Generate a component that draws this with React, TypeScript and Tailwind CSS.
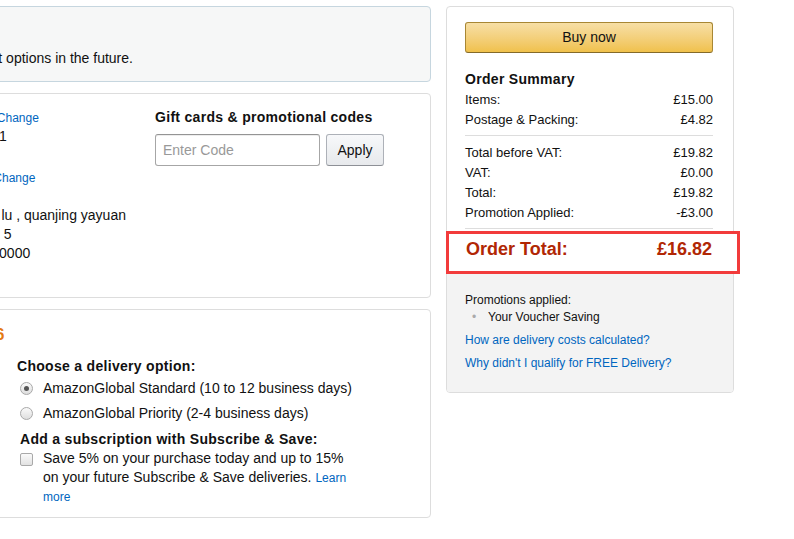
import React from "react";

function Radio({ checked }: { checked?: boolean }) {
    return (
        <span className="flex h-[13px] w-[13px] shrink-0 items-center justify-center rounded-full border border-[#a9a9a9] bg-linear-to-b from-[#fafafa] to-[#dedede]">
            {checked && <span className="h-[5px] w-[5px] rounded-full bg-[#555]" />}
        </span>
    );
}

function Row({ label, value }: { label: string; value: string }) {
    return (
        <div className="flex h-[20px] items-center justify-between">
            <span>{label}</span>
            <span>{value}</span>
        </div>
    );
}

export default function App() {
    return (
        <div className="min-h-[539px] bg-white font-['Liberation_Sans',Arial,sans-serif] text-[#111]">
            <div className="flex items-start gap-[15px] pt-[6px]">
                {/* left column, page scrolled so its start is off screen */}
                <div className="-ml-[248px] flex w-[679px] shrink-0 flex-col gap-[11px] text-[14px]">
                    <div className="rounded-[4px] border border-[#c6d6df] bg-[#f6f7f7] px-[18px] pb-[13px] pt-[20px]">
                        <p className="whitespace-nowrap text-[14px] font-bold leading-[22px]">Save time on future orders</p>
                        <p className="whitespace-nowrap leading-[19px]">
                            We'll use these delivery and payment options in the future.
                        </p>
                    </div>

                    <div className="flex rounded-[4px] border border-[#ddd] px-[18px] pb-[15px] pt-[14px] leading-[19px]">
                        <div className="w-[95px] overflow-hidden whitespace-nowrap">
                            <p className="font-bold">Delivery</p>
                            <p>Li Ming</p>
                            <p>Hangzhou</p>
                        </div>
                        <div className="ml-[14px] w-[265px] whitespace-nowrap">
                            <div className="flex h-[19px] items-baseline">
                                <span className="font-bold">Payment method</span>
                                <a className="ml-[4px] text-[12px] text-[#0066c0]">Change</a>
                            </div>
                            <p>VISA ending in 4321</p>
                            <div className="mt-[22px] flex h-[19px] items-baseline">
                                <span className="font-bold">Billing address</span>
                                <a className="ml-[13px] text-[12px] text-[#0066c0]">Change</a>
                            </div>
                            <p>Li Ming</p>
                            <p>Room 52 Jianghua lu , quanjing yayuan</p>
                            <p>Xihu District, Room 5</p>
                            <p>Hangzhou City , 310000</p>
                            <p>China</p>
                        </div>
                        <div className="ml-[10px] flex-1">
                            <p className="font-bold tracking-[0.3px]">Gift cards &amp; promotional codes</p>
                            <div className="mt-[7px] flex gap-[6px]">
                                <input
                                    placeholder="Enter Code"
                                    className="h-[32px] w-[165px] rounded-[3px] border border-[#a6a6a6] border-t-[#949494] px-[7px] text-[14px] shadow-[inset_0_1px_0_rgba(0,0,0,0.07)] outline-none placeholder:text-[#999]"
                                />
                                <button className="h-[32px] w-[58px] rounded-[3px] border border-[#adb1b8] border-b-[#8d9096] bg-linear-to-b from-[#f7f8fa] to-[#e7e9ec] text-[14px] text-[#111]">
                                    Apply
                                </button>
                            </div>
                        </div>
                    </div>

                    <div className="rounded-[4px] border border-[#ddd] px-[18px] pb-[11px] pt-[14px]">
                        <p className="whitespace-nowrap text-[16px] font-bold leading-[22px] tracking-[0.15px] text-[#e47911]">
                            Delivery: 9 Nov. - 26 Nov. 2016
                        </p>
                        <div className="mt-[11px] flex leading-[19px]">
                            <div className="flex w-[226px] gap-[10px] overflow-hidden whitespace-nowrap">
                                <div className="h-[90px] w-[90px] bg-[#f3f3f3]" />
                                <div>
                                    <p className="font-bold">Item</p>
                                    <p className="text-[#b12704]">£15.00</p>
                                </div>
                            </div>
                            <div className="ml-[20px]">
                                <p className="font-bold tracking-[0.3px]">Choose a delivery option:</p>
                                <div className="pl-[3px]">
                                    <label className="flex h-[25px] items-center gap-[10px]">
                                        <Radio checked />
                                        <span>AmazonGlobal Standard (10 to 12 business days)</span>
                                    </label>
                                    <label className="flex h-[25px] items-center gap-[10px]">
                                        <Radio />
                                        <span>AmazonGlobal Priority (2-4 business days)</span>
                                    </label>
                                    <p className="mt-[4px] font-bold tracking-[0.3px]">Add a subscription with Subscribe &amp; Save:</p>
                                    <div className="flex items-start gap-[10px]">
                                        <span className="mt-[4px] h-[13px] w-[13px] shrink-0 rounded-[2px] border border-[#a9a9a9] bg-linear-to-b from-[#fafafa] to-[#e2e2e2]" />
                                        <p className="w-[312px]">
                                            Save 5% on your purchase today and up to 15% on your future Subscribe &amp; Save deliveries.{" "}
                                            <a className="text-[12px] leading-none text-[#0066c0]">Learn more</a>
                                        </p>
                                    </div>
                                </div>
                            </div>
                        </div>
                    </div>
                </div>

                {/* order summary */}
                <div className="w-[288px] shrink-0 rounded-[4px] border border-[#ddd] text-[13px]">
                    <div className="pl-[18px] pr-[20px] pt-[15px]">
                        <button className="h-[31px] w-full rounded-[3px] border border-[#a88734] border-b-[#846a29] bg-linear-to-b from-[#f7dfa5] to-[#f0c14b] text-[14px] text-[#111]">
                            Buy now
                        </button>
                        <p className="mt-[16px] h-[20px] text-[14px] font-bold leading-[20px] tracking-[0.3px]">Order Summary</p>
                        <div className="pt-px">
                            <Row label="Items:" value="£15.00" />
                            <Row label="Postage & Packing:" value="£4.82" />
                        </div>
                        <div className="mb-[6px] mt-[5px] h-px bg-[#ddd]" />
                        <div className="pt-px">
                            <Row label="Total before VAT:" value="£19.82" />
                            <Row label="VAT:" value="£0.00" />
                            <Row label="Total:" value="£19.82" />
                            <Row label="Promotion Applied:" value="-£3.00" />
                        </div>
                        <div className="mt-[5px] h-px bg-[#ddd]" />
                        <div className="relative z-10 -ml-[19px] mt-[2px] flex h-[43px] w-[294px] items-start justify-between border-[3px] border-[#f23b3b] bg-white pl-[17px] pr-[25px] pt-[3px] text-[18px] font-bold leading-[24px] text-[#b12704]">
                            <span>Order Total:</span>
                            <span>£16.82</span>
                        </div>
                    </div>
                    <div className="rounded-b-[3px] bg-[#f3f3f3] px-[18px] pb-[20px] pt-[18px] text-[12px] leading-[17px]">
                        <p>Promotions applied:</p>
                        <div className="flex">
                            <span className="w-[23px] pl-[7px] text-[#aaa]">•</span>
                            <span>Your Voucher Saving</span>
                        </div>
                        <p className="mt-[6px] text-[#0066c0]">How are delivery costs calculated?</p>
                        <p className="mt-[6px] text-[#0066c0]">Why didn't I qualify for FREE Delivery?</p>
                    </div>
                </div>
            </div>
        </div>
    );
}
